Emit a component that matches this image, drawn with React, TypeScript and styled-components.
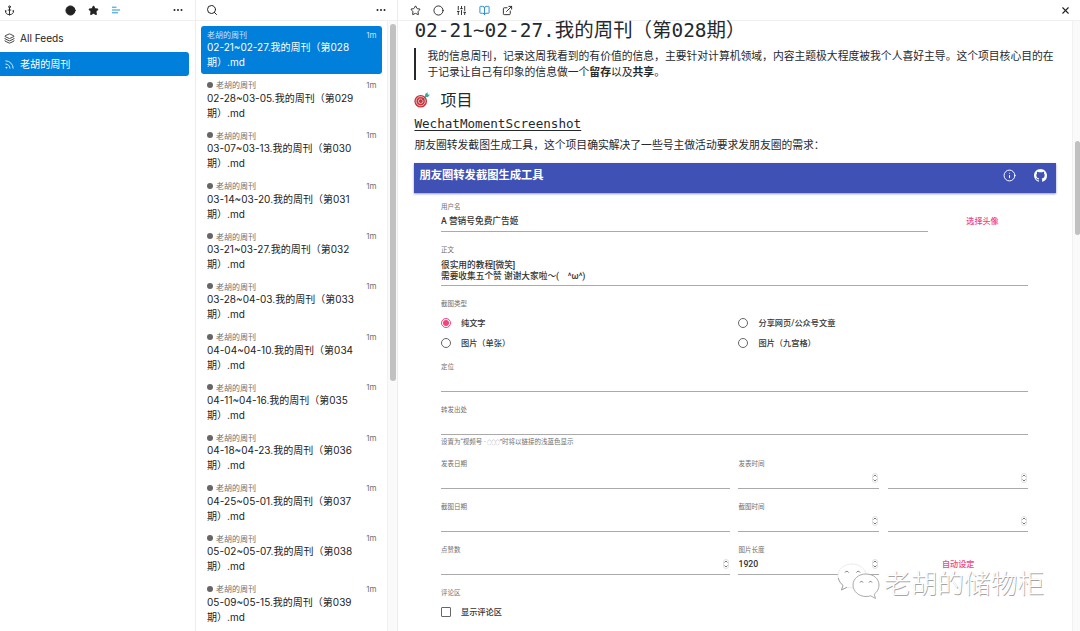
import React from 'react';
import styled, { createGlobalStyle, css } from 'styled-components';
import { Anchor, Layers, Rss, Search, Star, Circle, BookOpen, ExternalLink, X, SlidersVertical, Info } from 'lucide-react';

const GlobalStyle = createGlobalStyle`
  * { box-sizing: border-box; }
  html, body { margin: 0; padding: 0; }
  body {
    width: 1080px;
    height: 631px;
    overflow: hidden;
    background: #fff;
    color: #24292e;
    font-family: Inter, "Noto Sans CJK SC", sans-serif;
  }
  svg { display: block; flex: none; }
`;

const Window = styled.div`
  display: flex;
  width: 1080px;
  height: 631px;
  overflow: hidden;
`;

const Pane = styled.section<{ $width?: number }>`
  display: flex;
  flex-direction: column;
  height: 100%;
  min-width: 0;
  border-right: 1px solid #ececec;
  ${p => (p.$width ? css`flex: 0 0 ${p.$width}px;` : css`flex: 1; border-right: 0;`)}
`;

const Toolbar = styled.header<{ $pad: string; $gap?: number }>`
  display: flex;
  align-items: center;
  flex: 0 0 21px;
  gap: ${p => p.$gap ?? 0}px;
  padding: ${p => p.$pad};
  border-bottom: 1px solid #efefef;
  color: #222;
`;

const Spacer = styled.div`
  flex: 1;
`;

const Filters = styled.div`
  display: flex;
  align-items: center;
  gap: 12px;
  margin-left: 50px;
`;

const FeedRow = styled.div<{ $active?: boolean }>`
  display: flex;
  align-items: center;
  gap: 5px;
  height: 24px;
  margin-right: 6px;
  padding-left: 4px;
  margin-bottom: 2px;
  border-radius: 0 3px 3px 0;
  font-size: 10.1px;
  line-height: 14px;
  white-space: nowrap;
  color: ${p => (p.$active ? '#fff' : '#222')};
  background: ${p => (p.$active ? '#007fdb' : 'transparent')};
`;

const FeedList = styled.nav`
  padding-top: 5px;
`;

const ListBody = styled.div`
  display: flex;
  flex: 1;
  min-height: 0;
`;

const Entries = styled.div`
  flex: 1;
  padding: 5px 5px 0 5px;
`;

const Entry = styled.article<{ $active?: boolean }>`
  height: 48px;
  margin-bottom: 2.38px;
  padding: 3px 5.5px 0 6px;
  border-radius: 3px;
  color: ${p => (p.$active ? '#fff' : '#222')};
  background: ${p => (p.$active ? '#007fdb' : 'transparent')};
`;

const EntryMeta = styled.div<{ $active?: boolean }>`
  display: flex;
  align-items: center;
  height: 11px;
  font-size: 8px;
  color: ${p => (p.$active ? '#c9e4f8' : '#707070')};
`;

const UnreadDot = styled.i`
  width: 6px;
  height: 6px;
  margin-right: 3px;
  border-radius: 50%;
  background: #666;
`;

const EntryTitle = styled.div`
  padding-top: 0.4px;
  font-size: 10px;
  line-height: 15px;
  white-space: pre;
`;

const Track = styled.div<{ $width: number }>`
  flex: 0 0 ${p => p.$width}px;
  display: flex;
  justify-content: flex-end;
  background: #fafafa;
  border-left: 1px solid #f1f1f1;
`;

const Thumb = styled.div<{ $top: number; $height: number; $width: number; $right?: number }>`
  width: ${p => p.$width}px;
  height: ${p => p.$height}px;
  margin: ${p => p.$top}px ${p => p.$right ?? 0}px 0 0;
  border-radius: 3px;
  background: #c1c1c1;
`;

const Reader = styled.main`
  flex: 1;
  min-width: 0;
  padding-left: 16.4px;
`;

const Title = styled.h1`
  margin: 0;
  height: 27px;
  font: 400 19.45px/20px "DejaVu Sans Mono", "Noto Sans CJK SC", monospace;
  white-space: nowrap;
`;

const Quote = styled.blockquote`
  margin: 0;
  height: 32px;
  padding: 0.6px 0 0 11px;
  border-left: 2px solid #24292e;
  font-size: 10.8px;
  line-height: 16.4px;
  white-space: nowrap;
`;

const Heading = styled.h2`
  display: flex;
  align-items: center;
  gap: 10px;
  margin: 8px 0 0;
  height: 24px;
  font-size: 16px;
  line-height: 22px;
  font-weight: 400;
`;

const ProjectLink = styled.a`
  display: block;
  height: 24px;
  font: 12.6px/23px "DejaVu Sans Mono", monospace;
  text-decoration: underline;
  text-underline-offset: 2px;
`;

const Paragraph = styled.p`
  margin: 0;
  height: 27px;
  font-size: 10.8px;
  line-height: 19px;
  white-space: nowrap;
`;

const Shot = styled.div`
  width: 642px;
  font-family: Roboto, "Noto Sans CJK SC", sans-serif;
`;

const ShotBar = styled.div`
  display: flex;
  gap: 18px;
  height: 30px;
  padding: 6px 9px 0 5px;
  color: #fff;
  background: #3f51b5;
  box-shadow: 0 1px 2px rgba(40, 50, 110, 0.5);
`;

const ShotTitle = styled.div`
  flex: 1;
  font-size: 11.3px;
  font-weight: 700;
  line-height: 14px;
`;

const Form = styled.div`
  padding: 10px 28px 0 26.6px;
`;

const Row = styled.div`
  display: flex;
  gap: 8.5px;
`;

const Field = styled.div<{ $width?: number; $tall?: boolean }>`
  display: flex;
  flex-direction: column;
  flex: ${p => (p.$width ? `0 0 ${p.$width}px` : '1')};
  height: ${p => (p.$tall ? 40 : 29)}px;
  margin-bottom: 14px;
  border-bottom: 1px solid #aaa;
`;

const Label = styled.div`
  height: 8px;
  font-size: 6.5px;
  line-height: 8px;
  color: #707070;
  white-space: nowrap;
`;

const Hint = styled(Label)`
  margin: -11px 0 14px;
`;

const Rings = styled.span`
  font-family: "Noto Sans CJK SC", sans-serif;
  font-size: 4.2px;
  vertical-align: 0.5px;
  line-height: 1;
`;

const Value = styled.div`
  display: flex;
  align-items: center;
  justify-content: space-between;
  height: 12px;
  margin-top: 4px;
  font-size: 8.7px;
  line-height: 11px;
  font-weight: 500;
  color: #333;
  white-space: pre;
`;

const TextArea = styled(Value)`
  display: block;
  height: 24px;
  margin-top: 5.5px;
`;

const Stepper = styled.span`
  display: grid;
  place-items: center;
  width: 6px;
  height: 10px;
  margin-left: auto;
  margin-right: 1px;
  border: 1px solid #e0e0e0;
  border-radius: 3px;
`;

const Action = styled.div<{ $width: number; $top?: number }>`
  flex: 0 0 ${p => p.$width}px;
  height: 25px;
  padding-top: ${p => p.$top ?? 13}px;
  font-size: 8.1px;
  line-height: 11px;
  font-weight: 500;
  text-align: center;
  color: #f0437c;
`;

const Options = styled.div`
  display: grid;
  grid-template-columns: 297.5px 1fr;
  grid-auto-rows: 20px;
  margin: 5px 0 10px;
`;

const Option = styled.label`
  display: flex;
  align-items: center;
  height: 20px;
  gap: 10px;
  font-size: 8.2px;
  line-height: 18px;
  font-weight: 500;
  color: #333;
`;

const Radio = styled.span<{ $on?: boolean }>`
  display: grid;
  place-items: center;
  width: 10px;
  height: 10px;
  border: 1px solid ${p => (p.$on ? '#f0437c' : '#666')};
  border-radius: 50%;
  &::after {
    content: "";
    width: 6px;
    height: 6px;
    border-radius: 50%;
    background: ${p => (p.$on ? '#f0437c' : 'transparent')};
  }
`;

const Checkbox = styled.span`
  width: 10px;
  height: 10px;
  border: 1px solid #666;
  border-radius: 1px;
`;

const Watermark = styled.div`
  position: absolute;
  left: 836px;
  top: 560px;
  display: flex;
  align-items: center;
  gap: 4px;
  height: 44px;
  font: 300 26.7px/30px "Noto Sans CJK SC", sans-serif;
  color: #fff;
  white-space: nowrap;
  text-shadow: 0.7px 0.7px 0.4px #a4a4a4, 0 0 1px #e6e6e6;
`;

const Dots = () => (
  <svg width="10" height="4" viewBox="0 0 10 4" fill="#222">
    <circle cx="1.5" cy="2" r="1" /><circle cx="5" cy="2" r="1" /><circle cx="8.5" cy="2" r="1" />
  </svg>
);

const FilterLines = () => (
  <svg width="10" height="10" viewBox="0 0 10 10" stroke="#2196d3" strokeWidth="1">
    <path d="M1 2.2h4.5M1 5h8M1 7.8h6" />
  </svg>
);

const Target = () => (
  <svg width="16" height="16" viewBox="0 0 16 16">
    <circle cx="6.7" cy="9.2" r="6.3" fill="#c9303a" />
    <circle cx="6.7" cy="9.2" r="4.6" fill="none" stroke="#f3dcdc" strokeWidth="0.8" />
    <circle cx="6.7" cy="9.2" r="2.3" fill="none" stroke="#f3dcdc" strokeWidth="0.8" />
    <path d="M6.7 9.2L13 3.5" stroke="#54606a" strokeWidth="0.9" />
    <path d="M10.600 5.200l.8-3.400L13.600.3l.2 2.200 2.100.3-2 2.200z" fill="#38a9a4" />
  </svg>
);

const GithubMark = () => (
  <svg width="13" height="13" viewBox="0 0 16 16" fill="#fff">
    <path d="M8 0C3.58 0 0 3.58 0 8c0 3.54 2.29 6.53 5.47 7.59.4.07.55-.17.55-.38 0-.19-.01-.82-.01-1.49-2.01.37-2.53-.49-2.69-.94-.09-.23-.48-.94-.82-1.13-.28-.15-.68-.52-.01-.53.63-.01 1.08.58 1.23.82.72 1.21 1.87.87 2.33.66.07-.52.28-.87.51-1.07-1.78-.2-3.64-.89-3.64-3.95 0-.87.31-1.59.82-2.15-.08-.2-.36-1.02.08-2.12 0 0 .67-.21 2.2.82.64-.18 1.32-.27 2-.27s1.36.09 2 .27c1.53-1.04 2.2-.82 2.2-.82.44 1.1.16 1.92.08 2.12.51.56.82 1.27.82 2.15 0 3.07-1.87 3.75-3.65 3.95.29.25.54.73.54 1.48 0 1.07-.01 1.93-.01 2.2 0 .21.15.46.55.38A8.01 8.01 0 0 0 16 8c0-4.42-3.58-8-8-8z" />
  </svg>
);

const ChatBubbles = () => (
  <svg width="44" height="42" viewBox="0 0 44 42" fill="#fff" strokeLinejoin="round">
    <path d="M16 3C8 3 2 8 2 15c0 4 2 7 5 9.300l-1.500 4.700 5.500-2.800c2 .5 3 .7 5 .7 8 0 14-5.200 14-12S24 3 16 3z" stroke="#e6e6e6" strokeWidth="0.8" />
    <path d="M2.300 17c.7 3 2.200 5.500 4.700 7.300l-1.500 4.700 5.500-2.800" fill="none" stroke="#999" strokeWidth="0.9" />
    <path d="M30 13c-7.500 0-13 4.800-13 11s5.500 11.500 13 11.500c1.700 0 3-.2 4.700-.7l4.800 2.700-1.300-4.200c3-2.300 4.800-5.500 4.800-9.300 0-6.200-5.500-11-13-11z" stroke="#a0a0a0" strokeWidth="0.9" />
    <path d="M9 11.500c.5-1.600 3-1.600 3.500 0M20.500 11.500c.5-1.600 3-1.600 3.500 0M24 21.500c.4-1.400 2.600-1.400 3 0M33 21.500c.4-1.400 2.600-1.400 3 0" fill="none" stroke="#777" strokeWidth="1" />
  </svg>
);

const Spin = () => (
  <Stepper>
    <svg width="4" height="8" viewBox="0 0 4 8" fill="none" stroke="#555" strokeWidth="0.8">
      <path d="M.5 2.500L2 1l1.500 1.500M.5 5.500L2 7l1.500-1.500" />
    </svg>
  </Stepper>
);

const entries: [string, string][] = [
  ['02-21~02-27', '028'], ['02-28~03-05', '029'], ['03-07~03-13', '030'], ['03-14~03-20', '031'],
  ['03-21~03-27', '032'], ['03-28~04-03', '033'], ['04-04~04-10', '034'], ['04-11~04-16', '035'],
  ['04-18~04-23', '036'], ['04-25~05-01', '037'], ['05-02~05-07', '038'], ['05-09~05-15', '039'],
];

export default function App() {
  return (
    <Window>
      <GlobalStyle />
      <Pane $width={196}>
        <Toolbar $pad="0 12px 0 4px">
          <Anchor size={11} strokeWidth={2} />
          <Filters>
            <Circle size={11} fill="#222" />
            <Star size={11} fill="#222" />
            <FilterLines />
          </Filters>
          <Spacer />
          <Dots />
        </Toolbar>
        <FeedList>
          <FeedRow><Layers size={11} strokeWidth={1.8} />All Feeds</FeedRow>
          <FeedRow $active><Rss size={11} strokeWidth={1.8} />老胡的周刊</FeedRow>
        </FeedList>
      </Pane>

      <Pane $width={202}>
        <Toolbar $pad="0 11px 0 10px">
          <Search size={12} />
          <Spacer />
          <Dots />
        </Toolbar>
        <ListBody>
          <Entries>
            {entries.map(([range, no], i) => (
              <Entry key={no} $active={i === 0}>
                <EntryMeta $active={i === 0}>
                  {i > 0 && <UnreadDot />}
                  老胡的周刊
                  <Spacer />
                  1m
                </EntryMeta>
                <EntryTitle>{`${range}.我的周刊（第${no}\n期）.md`}</EntryTitle>
              </Entry>
            ))}
          </Entries>
          <Track $width={10}><Thumb $width={6} $top={3} $height={357} $right={1} /></Track>
        </ListBody>
      </Pane>

      <Pane>
        <Toolbar $pad="0 9px 0 11.5px" $gap={12}>
          <Star size={11} />
          <Circle size={11} />
          <SlidersVertical size={11} />
          <BookOpen size={11} color="#1c88cf" />
          <ExternalLink size={11} />
          <Spacer />
          <X size={11} strokeWidth={2.4} />
        </Toolbar>
        <ListBody>
          <Reader>
            <Title>02-21~02-27.我的周刊（第028期）</Title>
            <Quote>
              我的信息周刊，记录这周我看到的有价值的信息，主要针对计算机领域，内容主题极大程度被我个人喜好主导。这个项目核心目的在<br />
              于记录让自己有印象的信息做一个<b>留存</b>以及<b>共享</b>。
            </Quote>
            <Heading><Target />项目</Heading>
            <ProjectLink>WechatMomentScreenshot</ProjectLink>
            <Paragraph>朋友圈转发截图生成工具，这个项目确实解决了一些号主做活动要求发朋友圈的需求：</Paragraph>
            <Shot>
              <ShotBar>
                <ShotTitle>朋友圈转发截图生成工具</ShotTitle>
                <Info size={13} strokeWidth={1.8} />
                <GithubMark />
              </ShotBar>
              <Form>
                <Row>
                  <Field $width={487}><Label>用户名</Label><Value>A 营销号免费广告姬</Value></Field>
                  <Action $width={92}>选择头像</Action>
                </Row>
                <Field $tall>
                  <Label>正文</Label>
                  <TextArea>{'很实用的教程[微笑]\n需要收集五个赞 谢谢大家啦～(　^ω^)'}</TextArea>
                </Field>
                <Label>截图类型</Label>
                <Options>
                  <Option><Radio $on />纯文字</Option>
                  <Option><Radio />分享网页/公众号文章</Option>
                  <Option><Radio />图片（单张）</Option>
                  <Option><Radio />图片（九宫格）</Option>
                </Options>
                <Field><Label>定位</Label></Field>
                <Field><Label>转发出处</Label></Field>
                <Hint>设置为“视频号 · <Rings>○○○</Rings>”时将以链接的浅蓝色显示</Hint>
                <Row>
                  <Field $width={289}><Label>发表日期</Label></Field>
                  <Field><Label>发表时间</Label><Value><Spin /></Value></Field>
                  <Field><Label /><Value><Spin /></Value></Field>
                </Row>
                <Row>
                  <Field $width={289}><Label>截图日期</Label></Field>
                  <Field><Label>截图时间</Label><Value><Spin /></Value></Field>
                  <Field><Label /><Value><Spin /></Value></Field>
                </Row>
                <Row>
                  <Field $width={289}><Label>点赞数</Label><Value><Spin /></Value></Field>
                  <Field><Label>图片长度</Label><Value>1920<Spin /></Value></Field>
                  <Action $width={140.5}>自动设定</Action>
                </Row>
                <Label>评论区</Label>
                <Options><Option><Checkbox />显示评论区</Option></Options>
              </Form>
            </Shot>
          </Reader>
          <Track $width={8}><Thumb $width={5} $top={120} $height={94} /></Track>
        </ListBody>
      </Pane>
      <Watermark><ChatBubbles />老胡的储物柜</Watermark>
    </Window>
  );
}
